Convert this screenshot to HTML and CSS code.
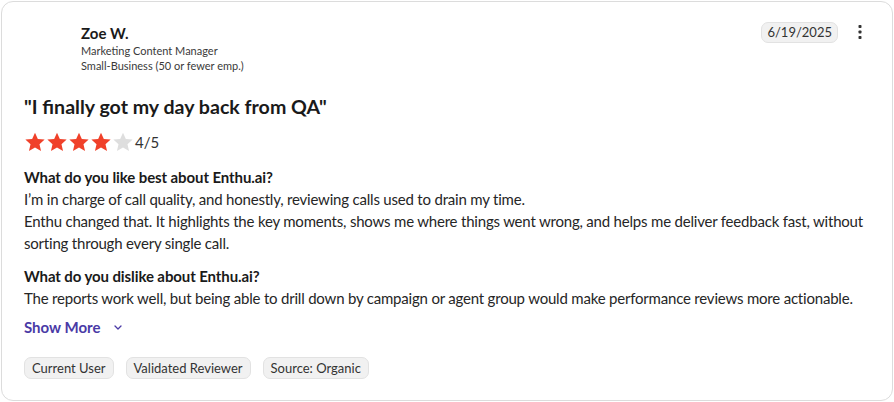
FILE: index.html
```html
<!DOCTYPE html>
<html>
<head>
<meta charset="utf-8">
<link rel="stylesheet" href="styles.css">
</head>
<body>
<div class="card">
  <div class="head">
    <div class="avatar"></div>
    <div class="who">
      <div class="name">Zoe W.</div>
      <div class="meta">Marketing Content Manager</div>
      <div class="meta">Small-Business (50 or fewer emp.)</div>
    </div>
    <div class="date">6/19/2025</div>
    <div class="kebab"><svg width="4" height="14" viewBox="0 0 4 14"><rect x="0.5" y="0" width="3" height="3" rx="0.8" fill="#333"/><rect x="0.5" y="5.5" width="3" height="3" rx="0.8" fill="#333"/><rect x="0.5" y="11" width="3" height="3" rx="0.8" fill="#333"/></svg></div>
  </div>
  <h2 class="title">"I finally got my day back from QA"</h2>
  <div class="rating">
    <svg class="star on" viewBox="0 0 24 24"><path d="M12 1.8l3.1 6.9 7.4.7-5.6 5 1.7 7.4L12 17.9l-6.6 3.9 1.7-7.4-5.6-5 7.4-.7z"/></svg>
    <svg class="star on" viewBox="0 0 24 24"><path d="M12 1.8l3.1 6.9 7.4.7-5.6 5 1.7 7.4L12 17.9l-6.6 3.9 1.7-7.4-5.6-5 7.4-.7z"/></svg>
    <svg class="star on" viewBox="0 0 24 24"><path d="M12 1.8l3.1 6.9 7.4.7-5.6 5 1.7 7.4L12 17.9l-6.6 3.9 1.7-7.4-5.6-5 7.4-.7z"/></svg>
    <svg class="star on" viewBox="0 0 24 24"><path d="M12 1.8l3.1 6.9 7.4.7-5.6 5 1.7 7.4L12 17.9l-6.6 3.9 1.7-7.4-5.6-5 7.4-.7z"/></svg>
    <svg class="star off" viewBox="0 0 24 24"><path d="M12 1.8l3.1 6.9 7.4.7-5.6 5 1.7 7.4L12 17.9l-6.6 3.9 1.7-7.4-5.6-5 7.4-.7z"/></svg>
    <span class="score">4/5</span>
  </div>
  <div class="qa">
    <div class="q">What do you like best about Enthu.ai?</div>
    <p class="a">I’m in charge of call quality, and honestly, reviewing calls used to drain my time.<br>Enthu changed that. It highlights the key moments, shows me where things went wrong, and helps me deliver feedback fast, without sorting through every single call.</p>
  </div>
  <div class="qa">
    <div class="q">What do you dislike about Enthu.ai?</div>
    <p class="a">The reports work well, but being able to drill down by campaign or agent group would make performance reviews more actionable.</p>
  </div>
  <div class="more">Show More <svg class="chev" width="8" height="5" viewBox="0 0 8 5"><path d="M1 1l3 3 3-3" fill="none" stroke="#4a3aa6" stroke-width="1.3" stroke-linecap="round" stroke-linejoin="round"/></svg></div>
  <div class="tags">
    <span class="tag">Current User</span>
    <span class="tag">Validated Reviewer</span>
    <span class="tag">Source: Organic</span>
  </div>
</div>
</body>
</html>
```
FILE: styles.css
```css
* { box-sizing: border-box; }
html, body { margin: 0; padding: 0; background: #fff; }
body { font-family: Lato, "Open Sans", sans-serif; color: #222; }
.card {
  width: 892px;
  height: 400px;
  margin: 1px;
  border: 1px solid #dcdcdc;
  border-radius: 12px;
  padding: 19px 18px 0 22px;
}
.head { display: flex; align-items: flex-start; }
.avatar { width: 48px; height: 48px; margin-right: 9px; }
.who { flex: 1; padding-top: 2px; }
.name { font-weight: 700; font-size: 15px; line-height: 20px; color: #1a1a1a; }
.meta { font-size: 11px; line-height: 15px; color: #3a3a3a; }
.date {
  margin-top: 1px;
  background: #f1f1f1;
  border: 1px solid #e2e2e2;
  border-radius: 7px;
  font-size: 13px;
  line-height: 19px;
  padding: 0 5px;
  color: #333;
}
.kebab { width: 28px; margin-left: 8px; padding-top: 4px; display: flex; justify-content: center; }
.title { font-size: 19.6px; font-weight: 700; margin: 21px 0 0; line-height: 26px; color: #1a1a1a; }
.rating { display: flex; align-items: center; margin-top: 11px; height: 22px; }
.star { width: 22px; height: 22px; }
.star.on { fill: #f0412a; }
.star.off { fill: #dedede; }
.score { font-size: 15px; margin-left: 1px; color: #333; }
.qa { margin-top: 13px; }
.qa + .qa { margin-top: 11px; }
.q { font-weight: 700; font-size: 15px; line-height: 22px; color: #1a1a1a; letter-spacing: -0.1px; }
.a { margin: 0; font-size: 15px; line-height: 22px; color: #262626; letter-spacing: -0.2px; }
.more { margin-top: 7px; color: #4a3aa6; font-weight: 700; font-size: 15px; line-height: 22px; display: flex; align-items: center; }
.chev { margin-left: 14px; }
.tags { display: flex; gap: 12px; margin-top: 19px; }
.tag {
  background: #f1f1f1;
  border: 1px solid #e2e2e2;
  border-radius: 7px;
  font-size: 13px;
  line-height: 20px;
  padding: 0 7px;
  color: #333;
}
```
